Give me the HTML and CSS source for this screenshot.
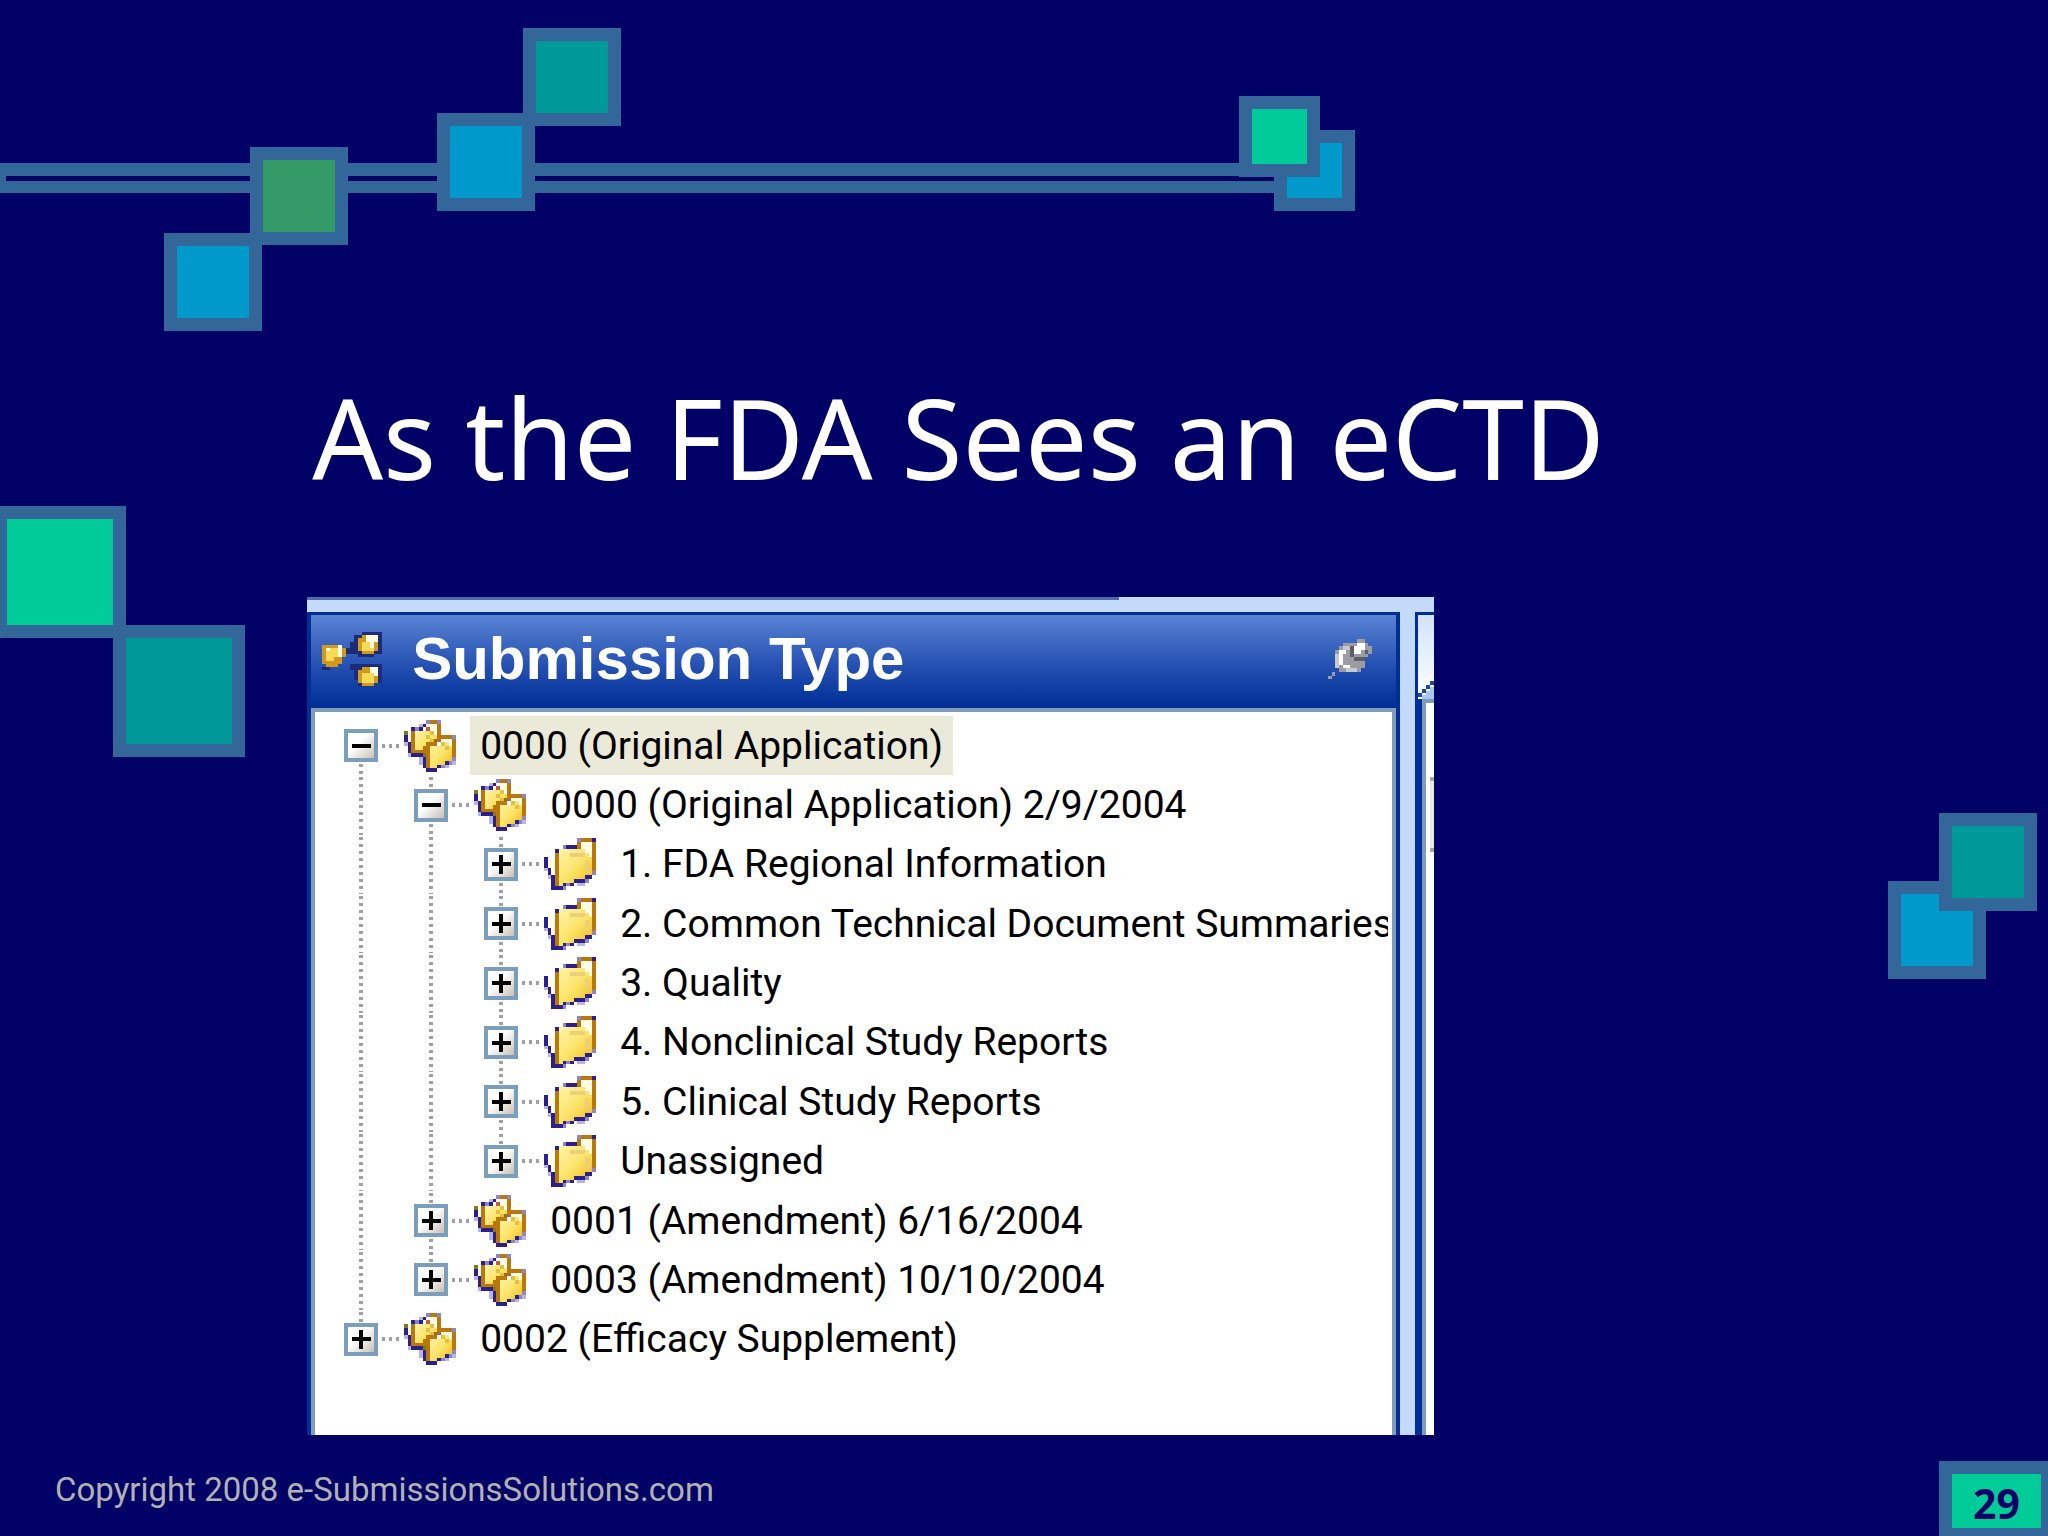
FILE: index.html
```
<!DOCTYPE html>
<html lang="en">
<head>
    <meta charset="UTF-8">
    <title>As the FDA Sees an eCTD</title>
    <link rel="stylesheet" href="styles.css">
</head>
<body>
<!-- icon shapes, one unit per pixel of the 14px originals -->
<svg class="defs" aria-hidden="true">
    <defs>
        <linearGradient id="gold" x1="0" y1="0" x2="1" y2="1">
            <stop offset="0" stop-color="#fff3a8"/>
            <stop offset="0.5" stop-color="#fce46a"/>
            <stop offset="1" stop-color="#efb80c"/>
        </linearGradient>
        <symbol id="folder" viewBox="0 0 14 14">
            <path fill="#b9b5e0" d="M0 8h1v1h-1zM1 10h1v1h-1zM2 12h1v1h-1zM9 12h2v1h-2z"/>
            <path fill="#fffbe6" d="M1 6h3v5h-2v-2h-1zM10 1h3v8h-3z"/>
            <path fill="url(#gold)" d="M4 3h7v1h1v1h1v5h-1v1h-3v1h-4v1h-1z"/>
            <path fill="#ead07a" d="M7 4h4v1h-4zM11 6h1v3h-1z"/>
            <path fill="#b8780c" d="M9 0h5v1h-5zM9 1h1v2h-1zM13 1h1v8h-1zM3 4h1v9h-1z"/>
            <path fill="#2a1f8c" d="M3 3h1v1h-1zM5 2h4v1h-4zM13 0h1v1h-1zM0 5h1v3h-1zM1 8h1v2h-1zM2 10h1v3h-1zM2 13h3v1h-3zM5 12h3v1h-3zM8 11h3v1h-3zM13 9h1v1h-1zM11 10h2v1h-2z"/>
            <path fill="#8e86c8" d="M5 13h1v1h-1zM6 12h1v1h-1zM5 2h1v1h-1zM11 11h1v1h-1zM13 9h1v1h-1zM9 0h1v1h-1z"/>
        </symbol>
        <symbol id="folders" viewBox="0 0 14 14">
            <path fill="#b9b5e0" d="M4 1h1v1h-1zM0 6h1v1h-1zM1 8h1v2h-1zM4 10h1v2h-1zM13 11h1v1h-1zM11 12h1v1h-1z"/>
            <path fill="#fffbe6" d="M6 1h3v4h-3zM10 5h3v5h-3zM1 4h1v2h-1z"/>
            <path fill="url(#gold)" d="M3 3h5v1h1v5h-6z"/>
            <path fill="url(#gold)" d="M7 7h4v-1h1v1h1v4h-2v1h-2v1h-2z"/>
            <path fill="#e3bf45" d="M7 3h1v1h-1zM6 4h1v1h-1zM7 5h1v1h-1zM10 6h1v1h-1zM11 7h1v1h-1z"/>
            <path fill="#b8780c" d="M6 0h4v1h-4zM9 1h1v4h-1zM2 3h1v6h-1zM3 8h2v1h-2zM10 4h4v1h-4zM13 5h1v5h-1zM6 6h3v1h-3zM6 7h1v6h-1zM5 7h1v2h-1z"/>
            <path fill="#8a7318" d="M0 3h1v1h-1zM8 5h1v1h-1zM5 9h1v1h-1z"/>
            <path fill="#2a1f8c" d="M5 1h1v1h-1zM2 2h1v1h-1zM4 2h1v1h-1zM0 4h1v2h-1zM1 6h1v3h-1zM2 9h3v1h-3zM5 10h1v3h-1zM6 13h3v1h-3zM9 12h1v1h-1zM11 11h1v1h-1z"/>
            <path fill="#8e86c8" d="M6 0h1v1h-1zM9 0h1v1h-1zM3 2h1v1h-1zM13 4h1v1h-1zM10 12h1v1h-1zM12 11h1v1h-1zM13 10h1v1h-1z"/>
            <path fill="#c2603c" d="M6 2h1v1h-1zM9 5h1v1h-1z"/>
        </symbol>
    </defs>
</svg>

<div class="slide">
    <div class="decor" aria-hidden="true">
        <div class="rail"></div>
        <div class="square blue s1"></div>
        <div class="square green s2"></div>
        <div class="square blue s3"></div>
        <div class="square teal s4"></div>
        <div class="square small blue s5"></div>
        <div class="square small mint s6"></div>
        <div class="square large mint s7"></div>
        <div class="square large teal s8"></div>
        <div class="square blue s9"></div>
        <div class="square teal s10"></div>
    </div>

    <main class="content">
        <h1 class="title">As the FDA Sees an eCTD</h1>

        <div class="window">
            <div class="topline"></div>
            <div class="panes">
                <section class="pane">
                    <header class="pane-header">
                        <svg class="type-icon" viewBox="1 0 15 17" preserveAspectRatio="none" shape-rendering="crispEdges" aria-hidden="true">
                            <path fill="#1b2b78" d="M9 1h2v-1h5v7h-2v1h-4v-1h-2v-4h1zM9 10h7v6h-3v1h-3v-2h-1v-3h-1v-2h1zM6 5h2v2h-2zM1 11h2v1h-2z"/>
                            <path fill="#d29a1c" d="M1 4h5v1h1v3h-1v2h-1v1h-3v-1h-1v-2h-1v-3h1zM10 2h1v-1h4v5h-1v1h-3v-1h-1zM10 12h1v-1h4v5h-1v1h-3v-1h-1z"/>
                            <path fill="#f8da5a" d="M2 5h3v3h-1v1h-2zM11 3h3v3h-3zM11 13h3v3h-3z"/>
                            <path fill="#fffbe0" d="M5 4h1v4h-1zM12 1h3v2h-1v2h-1v-2h-1zM13 11h2v3h-1v-1h-1zM2 5h1v1h-1z"/>
                        </svg>
                        <h2 class="pane-title">Submission Type</h2>
                        <button class="pin" type="button" aria-label="Pin panel">
                            <svg viewBox="0 0 12 11" shape-rendering="crispEdges" aria-hidden="true">
                                <path fill="#9c9ca4" d="M0 10h1v1h-1zM1 9h1v1h-1zM2 3h1v-1h1v-1h4v-1h2v1h1v1h1v2h-1v1h-1v3h-1v1h-6v-1h-1z"/>
                                <path fill="#c9c9cc" d="M2 4h1v4h-1zM5 8h3v1h-3zM4 2h2v1h-2z"/>
                                <path fill="#fff" d="M3 3h2v1h-1v3h2v1h-2v-1h-1zM7 2h1v-1h2v2h-1v1h-2z"/>
                                <path fill="#5c5f66" d="M6 2h1v3h3v1h-3v-1h-1zM10 3h1v1h-1z"/>
                            </svg>
                        </button>
                    </header>
                    <ul class="tree">
                        <li class="row">
                            <span class="node first"><button class="toggle" type="button" aria-label="Collapse"></button></span>
                            <svg class="icon"><use href="#folders"/></svg>
                            <span class="label selected">0000 (Original Application)</span>
                        </li>
                        <li class="row">
                            <span class="guide"></span>
                            <span class="node"><button class="toggle" type="button" aria-label="Collapse"></button></span>
                            <svg class="icon"><use href="#folders"/></svg>
                            <span class="label">0000 (Original Application) 2/9/2004</span>
                        </li>
                        <li class="row">
                            <span class="guide"></span><span class="guide"></span>
                            <span class="node"><button class="toggle plus" type="button" aria-label="Expand"></button></span>
                            <svg class="icon"><use href="#folder"/></svg>
                            <span class="label">1. FDA Regional Information</span>
                        </li>
                        <li class="row">
                            <span class="guide"></span><span class="guide"></span>
                            <span class="node"><button class="toggle plus" type="button" aria-label="Expand"></button></span>
                            <svg class="icon"><use href="#folder"/></svg>
                            <span class="label">2. Common Technical Document Summaries</span>
                        </li>
                        <li class="row">
                            <span class="guide"></span><span class="guide"></span>
                            <span class="node"><button class="toggle plus" type="button" aria-label="Expand"></button></span>
                            <svg class="icon"><use href="#folder"/></svg>
                            <span class="label">3. Quality</span>
                        </li>
                        <li class="row">
                            <span class="guide"></span><span class="guide"></span>
                            <span class="node"><button class="toggle plus" type="button" aria-label="Expand"></button></span>
                            <svg class="icon"><use href="#folder"/></svg>
                            <span class="label">4. Nonclinical Study Reports</span>
                        </li>
                        <li class="row">
                            <span class="guide"></span><span class="guide"></span>
                            <span class="node"><button class="toggle plus" type="button" aria-label="Expand"></button></span>
                            <svg class="icon"><use href="#folder"/></svg>
                            <span class="label">5. Clinical Study Reports</span>
                        </li>
                        <li class="row">
                            <span class="guide"></span><span class="guide"></span>
                            <span class="node last"><button class="toggle plus" type="button" aria-label="Expand"></button></span>
                            <svg class="icon"><use href="#folder"/></svg>
                            <span class="label">Unassigned</span>
                        </li>
                        <li class="row">
                            <span class="guide"></span>
                            <span class="node"><button class="toggle plus" type="button" aria-label="Expand"></button></span>
                            <svg class="icon"><use href="#folders"/></svg>
                            <span class="label">0001 (Amendment) 6/16/2004</span>
                        </li>
                        <li class="row">
                            <span class="guide"></span>
                            <span class="node last"><button class="toggle plus" type="button" aria-label="Expand"></button></span>
                            <svg class="icon"><use href="#folders"/></svg>
                            <span class="label">0003 (Amendment) 10/10/2004</span>
                        </li>
                        <li class="row">
                            <span class="node last"><button class="toggle plus" type="button" aria-label="Expand"></button></span>
                            <svg class="icon"><use href="#folders"/></svg>
                            <span class="label">0002 (Efficacy Supplement)</span>
                        </li>
                    </ul>
                </section>
                <div class="next-pane">
                    <svg class="tab" viewBox="0 0 16 84" preserveAspectRatio="none" shape-rendering="crispEdges" aria-hidden="true">
                        <path fill="#a9c7f5" d="M4 84v-4h4v-4h4v-4h4v12z"/>
                        <path fill="#1c48ac" d="M0 78h4v4h-4zM4 74h4v4h-4zM8 70h4v4h-4zM12 66h4v4h-4z"/>
                    </svg>
                    <div class="next-body"><div class="edge"></div></div>
                </div>
            </div>
        </div>
    </main>

    <footer class="footer">
        <p class="copyright">Copyright 2008 e-SubmissionsSolutions.com</p>
        <p class="page">29</p>
    </footer>
</div>
</body>
</html>
```
FILE: styles.css
```
* {
    margin: 0;
    padding: 0;
    box-sizing: border-box;
}

body {
    background-color: #000066;
    font-family: "Noto Sans", sans-serif;
}

ul {
    list-style: none;
}

.defs {
    position: absolute;
    width: 0;
    height: 0;
}

.slide {
    position: relative;
    display: flex;
    flex-direction: column;
    min-height: 100vh;
    overflow: hidden;
}

/* background squares */
.rail {
    position: absolute;
    left: -6px;
    top: 163px;
    width: 1300px;
    height: 30px;
    border: 12px solid #336699;
    border-top-width: 13px;
}

.square {
    position: absolute;
    width: 98px;
    height: 98px;
    border: 13px solid #336699;
}

.small {
    width: 81px;
    height: 81px;
}

.large {
    width: 132px;
    height: 132px;
}

.blue {
    background-color: #0099cc;
}

.green {
    background-color: #339966;
}

.teal {
    background-color: #009999;
}

.mint {
    background-color: #00cc99;
}

.s1 {
    left: 164px;
    top: 233px;
}

.s2 {
    left: 250px;
    top: 147px;
}

.s3 {
    left: 437px;
    top: 113px;
}

.s4 {
    left: 523px;
    top: 28px;
}

.s5 {
    left: 1274px;
    top: 130px;
}

.s6 {
    left: 1239px;
    top: 96px;
}

.s7 {
    left: -6px;
    top: 506px;
}

.s8 {
    left: 113px;
    top: 625px;
}

.s9 {
    right: 62px;
    top: 881px;
}

.s10 {
    right: 11px;
    top: 813px;
}

.content {
    position: relative;
    padding: 377px 0 0 15%;
}

.title {
    padding-left: 5px;
    color: #fff;
    font-size: 111px;
    font-weight: 400;
    line-height: 120px;
}

/* application window */
.window {
    width: 1127px;
    max-width: 100%;
    margin-top: 100px;
    background-color: #c4dafa;
}

.topline {
    width: 72%;
    height: 3px;
    background-color: #4a6ca8;
}

.panes {
    display: flex;
    gap: 15px;
    padding-top: 12px;
}

.pane {
    flex: 1;
    min-width: 0;
    border: 3px solid #002d96;
    border-width: 3px 4px 0;
}

.pane-header {
    display: flex;
    align-items: center;
    height: 93px;
    padding: 0 24px 6px 11px;
    background-image: linear-gradient(#5983d2, #2450b2 55%, #002d96);
}

.type-icon {
    width: 60px;
    height: 54px;
}

.pane-title {
    flex: 1;
    margin-left: 30px;
    color: #fff;
    font-family: "Liberation Sans", sans-serif;
    font-size: 60px;
    line-height: 64px;
}

.pin {
    width: 44px;
    height: 42px;
    border: none;
    background: none;
}

.pin svg {
    display: block;
    width: 100%;
    height: 100%;
}

.tree {
    display: grid;
    grid-auto-rows: 1fr;
    height: 727px;
    padding: 4px 4px 66px 29px;
    border: 4px solid #7f9db9;
    border-bottom: none;
    background-color: #fff;
}

.row {
    display: flex;
    align-items: center;
    min-width: 0;
    overflow: hidden;
}

.guide,
.node {
    display: flex;
    flex: none;
    flex-direction: column;
    align-items: center;
    align-self: stretch;
    width: 34px;
}

.guide {
    margin-right: 36px;
}

.guide::before,
.node::before,
.node::after {
    content: "";
    flex: 1;
    width: 4px;
    background-image: repeating-linear-gradient(#fff 0 2px, #a0a0a0 2px 5px, #fff 5px 7px);
}

.node.first::before,
.node.last::after {
    background-image: none;
}

.toggle {
    position: relative;
    flex: none;
    width: 34px;
    height: 33px;
    border: 4px solid #7b9ebd;
    background-image: linear-gradient(135deg, #fff 40%, #c8c0b4);
}

/* minus bar, and the upright of the plus */
.toggle::before,
.toggle.plus::after {
    content: "";
    position: absolute;
    inset: 0;
    margin: auto;
    width: 19px;
    height: 4px;
    background-color: #000;
}

.toggle.plus::after {
    width: 4px;
    height: 19px;
}

.icon {
    flex: none;
    width: 78px;
    height: 52px;
    padding-left: 26px;
    background: repeating-linear-gradient(90deg, #fff 0 4px, #a0a0a0 4px 7px) left / 21px 4px no-repeat;
    shape-rendering: crispEdges;
}

.label {
    flex: none;
    align-self: stretch;
    display: flex;
    align-items: center;
    margin-left: 14px;
    padding: 0 10px;
    color: #000;
    font-family: Roboto, sans-serif;
    font-size: 39px;
    white-space: nowrap;
}

.selected {
    background-color: #ebe9d8;
}

/* sliver of the neighbouring pane */
.next-pane {
    display: flex;
    flex-direction: column;
    width: 19px;
    border: 3px solid #002d96;
    border-width: 3px 0 0 3px;
    background-color: #002d96;
}

.tab {
    width: 16px;
    height: 84px;
    background-image: linear-gradient(#d3e2fa, #fff);
}

.next-body {
    flex: 1;
    margin-left: 4px;
    padding: 74px 0 0 4px;
    border-top: 4px solid #7f9db9;
    border-left: 4px solid #7f9db9;
    background-color: #fff;
}

.edge {
    height: 75px;
    border: 4px solid #a6a69c;
    border-width: 4px 0;
    background-color: #ebe9d8;
}

.footer {
    position: relative;
    display: flex;
    align-items: flex-start;
    justify-content: space-between;
    height: 75px;
    margin-top: auto;
    padding-left: 55px;
}

.copyright {
    padding-top: 9px;
    color: #b2b2b2;
    font-family: Roboto, sans-serif;
    font-size: 33px;
    line-height: 40px;
}

.page {
    width: 109px;
    height: 80px;
    border: 13px solid #336699;
    border-right-width: 7px;
    background-color: #00cc99;
    color: #000066;
    font-size: 41px;
    font-weight: 700;
    line-height: 58px;
    text-align: center;
}
```
